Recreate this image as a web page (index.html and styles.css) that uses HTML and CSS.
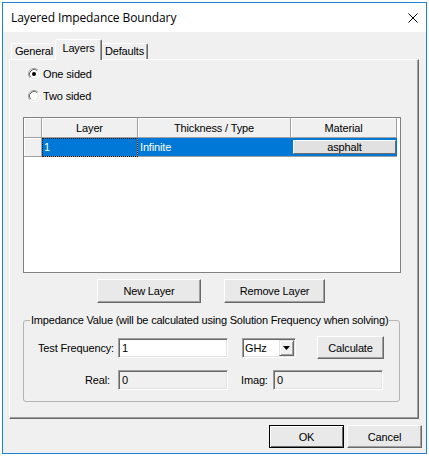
FILE: index.html
```html
<!DOCTYPE html>
<html>
<head>
<meta charset="utf-8">
<link rel="stylesheet" href="styles.css">
</head>
<body>
<div class="window">
  <div class="titlebar">
    <span class="title">Layered Impedance Boundary</span>
    <svg class="close" width="10" height="10" viewBox="0 0 10 10"><path d="M0.5 0.5 L9.5 9.5 M9.5 0.5 L0.5 9.5" stroke="#000" stroke-width="1" fill="none"/></svg>
  </div>
  <div class="client">
    <div class="tabstrip">
      <div class="tab t-general">General</div>
      <div class="tab t-layers active">Layers</div>
      <div class="tab t-defaults">Defaults</div>
    </div>
    <div class="panel">
      <div class="radios">
        <div class="radio">
          <svg width="12" height="12" viewBox="0 0 12 12"><circle cx="6" cy="6" r="5" fill="#fff"/><path d="M2.11 9.89 A5.5 5.5 0 0 1 9.89 2.11" stroke="#a0a0a0" fill="none"/><path d="M9.89 2.11 A5.5 5.5 0 0 1 2.11 9.89" stroke="#fff" fill="none"/><path d="M2.82 9.18 A4.5 4.5 0 0 1 9.18 2.82" stroke="#696969" fill="none"/><path d="M9.18 2.82 A4.5 4.5 0 0 1 2.82 9.18" stroke="#e3e3e3" fill="none"/><circle cx="6" cy="6" r="2" fill="#000"/></svg>
          <span>One sided</span>
        </div>
        <div class="radio">
          <svg width="12" height="12" viewBox="0 0 12 12"><circle cx="6" cy="6" r="5" fill="#fff"/><path d="M2.11 9.89 A5.5 5.5 0 0 1 9.89 2.11" stroke="#a0a0a0" fill="none"/><path d="M9.89 2.11 A5.5 5.5 0 0 1 2.11 9.89" stroke="#fff" fill="none"/><path d="M2.82 9.18 A4.5 4.5 0 0 1 9.18 2.82" stroke="#696969" fill="none"/><path d="M9.18 2.82 A4.5 4.5 0 0 1 2.82 9.18" stroke="#e3e3e3" fill="none"/></svg>
          <span>Two sided</span>
        </div>
      </div>
      <div class="grid">
        <div class="hc"></div>
        <div class="hc">Layer</div>
        <div class="hc">Thickness / Type</div>
        <div class="hc">Material</div>
        <div class="hc rowhead"></div>
        <div class="dc focus">1</div>
        <div class="dc">Infinite</div>
        <div class="dc btncell"><div class="cellbtn">asphalt</div></div>
      </div>
      <div class="layerbtns">
        <button class="btn w-new">New Layer</button>
        <button class="btn w-remove">Remove Layer</button>
      </div>
      <fieldset class="group">
        <legend>Impedance Value (will be calculated using Solution Frequency when solving)</legend>
        <div class="frow first">
          <span class="lbl">Test Frequency:</span>
          <div class="field input w-field">1</div>
          <div class="combo">
            <span class="combotext">GHz</span>
            <span class="dropbtn"><svg width="7" height="4" viewBox="0 0 7 4"><path d="M0 0 H7 L3.5 4 Z" fill="#000"/></svg></span>
          </div>
          <button class="btn w-calc">Calculate</button>
        </div>
        <div class="frow second">
          <span class="lbl lbl-real">Real:</span>
          <div class="field ro w-field">0</div>
          <span class="lbl-imag">Imag:</span>
          <div class="field ro w-field">0</div>
        </div>
      </fieldset>
    </div>
    <div class="footer">
      <button class="btn default w-dlg">OK</button>
      <button class="btn w-dlg">Cancel</button>
    </div>
  </div>
</div>
</body>
</html>
```
FILE: styles.css
```css
* { box-sizing: border-box; }
html, body { margin: 0; padding: 0; background: #fff; }
body {
  font-family: "Liberation Sans", Arial, sans-serif;
  font-size: 11px;
  letter-spacing: -0.15px;
  color: #000;
}
.window {
  margin: 2px 0 0 2px;
  width: 425px;
  height: 452px;
  border: 1px solid #1a84d8;
  display: flex;
  flex-direction: column;
}
.titlebar {
  height: 29px;
  flex: none;
  background: #fff;
  display: flex;
  align-items: center;
  justify-content: space-between;
  padding: 0 8px 0 8px;
}
.title {
  font-family: "Open Sans", "Noto Sans", sans-serif;
  font-size: 12px;
  letter-spacing: -0.1px;
  color: #000;
}
.close { display: block; }
.client {
  flex: 1;
  background: #f0f0f0;
  display: flex;
  flex-direction: column;
  padding: 7px 7px 5px 6px;
}
.tabstrip {
  height: 20px;
  flex: none;
  display: flex;
  align-items: flex-end;
  padding-left: 2px;
}
.tab {
  height: 16px;
  display: flex;
  align-items: center;
  justify-content: center;
  border-style: solid;
  border-width: 1px 1px 0 1px;
  border-color: #fff #696969 transparent #fff;
  box-shadow: inset -1px 0 0 #a0a0a0;
  border-top-left-radius: 2px;
  border-top-right-radius: 2px;
  padding-bottom: 1px;
}
.t-general { width: 46px; }
.t-layers { width: 44px; }
.t-defaults { width: 47px; }
.tab.active {
  width: 47px;
  height: 21px;
  margin: 0 -1px -1px -2px;
  background: #f0f0f0;
  position: relative;
  z-index: 1;
  padding-bottom: 4px;
}
.panel {
  height: 360px;
  flex: none;
  border-style: solid;
  border-width: 1px;
  border-color: #fff #696969 #696969 #fff;
  box-shadow: inset -1px -1px 0 #a0a0a0;
  padding: 6px 0 0 13px;
  display: flex;
  flex-direction: column;
  align-items: flex-start;
}
.radios {
  display: flex;
  flex-direction: column;
  gap: 6px;
  margin-left: 5px;
}
.radio {
  display: flex;
  align-items: center;
  gap: 3px;
  height: 16px;
}
.radio svg { display: block; }
.grid {
  margin-top: 13px;
  width: 378px;
  height: 156px;
  border: 1px solid #828282;
  background: #fff;
  display: grid;
  grid-template-columns: 18px 96px 153px 106px;
  grid-template-rows: 20px 19px;
  align-content: start;
}
.hc {
  background: #f0f0f0;
  border-right: 1px solid #a0a0a0;
  border-bottom: 1px solid #a0a0a0;
  box-shadow: inset 1px 1px 0 #fff;
  display: flex;
  align-items: center;
  justify-content: center;
}
.dc {
  background: #0078d7;
  color: #fff;
  border-bottom: 1px solid #a0a0a0;
  padding-left: 2px;
  display: flex;
  align-items: center;
}
.dc.focus {
  outline: 1px dotted #1a1208;
  outline-offset: -1px;
  border-right: 1px solid #a0a0a0;
}
.btncell { padding: 2px 1px 2px 2px; }
.cellbtn {
  flex: 1;
  height: 100%;
  background: #e1e1e1;
  color: #000;
  border-style: solid;
  border-width: 1px;
  border-color: #fff #696969 #696969 #fff;
  display: flex;
  align-items: center;
  justify-content: center;
}
.layerbtns {
  display: flex;
  gap: 23px;
  margin-top: 6px;
  padding-left: 74px;
}
.btn {
  font: inherit;
  letter-spacing: inherit;
  color: #000;
  background: #e9e9e9;
  border-style: solid;
  border-width: 1px;
  border-color: #fff #696969 #696969 #fff;
  box-shadow: inset -1px -1px 0 #a0a0a0;
  height: 24px;
  padding: 0;
  margin: 0;
}
.w-new { width: 104px; }
.w-remove { width: 101px; }
.w-calc { width: 67px; height: 23px; margin-left: 21px; }
.w-dlg { width: 75px; height: 23px; }
.btn.default {
  border-color: #000;
  box-shadow: inset 1px 1px 0 #fff, inset -1px -1px 0 #696969;
}
.group {
  margin: 11px 0 0 0;
  width: 377px;
  border: 1px solid #b4b4b4;
  border-radius: 3px;
  padding: 9px 0 11px 0;
  min-width: 0;
}
.group legend {
  margin-left: 6px;
  padding: 0 1px;
  line-height: 13px;
  letter-spacing: -0.2px;
}
.frow {
  display: flex;
  align-items: center;
}
.frow.first { height: 23px; }
.frow.second { height: 20px; margin-top: 11px; }
.lbl {
  width: 91px;
  text-align: right;
  padding-right: 1px;
}
.lbl.lbl-real { padding-right: 5px; }
.field {
  height: 20px;
  margin-left: 3px;
  border-style: solid;
  border-width: 1px;
  border-color: #a0a0a0 #fff #fff #a0a0a0;
  box-shadow: inset 1px 1px 0 #696969, inset -1px -1px 0 #e3e3e3;
  padding-left: 3px;
  display: flex;
  align-items: center;
}
.w-field { width: 110px; }
.input { background: #fff; }
.ro { background: #f0f0f0; }
.lbl-imag { margin-left: 13px; width: 29px; }
.combo {
  margin-left: 14px;
  width: 54px;
  height: 20px;
  background: #fff;
  border-style: solid;
  border-width: 1px;
  border-color: #a0a0a0 #fff #fff #a0a0a0;
  box-shadow: inset 1px 1px 0 #696969, inset -1px -1px 0 #e3e3e3;
  padding: 1px 1px 1px 2px;
  display: flex;
  align-items: center;
}
.combotext { flex: 1; }
.dropbtn {
  width: 15px;
  height: 16px;
  background: #f0f0f0;
  border-style: solid;
  border-width: 1px;
  border-color: #e3e3e3 #696969 #696969 #e3e3e3;
  box-shadow: inset 1px 1px 0 #fff, inset -1px -1px 0 #a0a0a0;
  display: flex;
  align-items: center;
  justify-content: center;
}
.dropbtn svg { display: block; }
.footer {
  display: flex;
  justify-content: flex-end;
  gap: 3px;
  margin-top: 6px;
  margin-right: -3px;
}
```
